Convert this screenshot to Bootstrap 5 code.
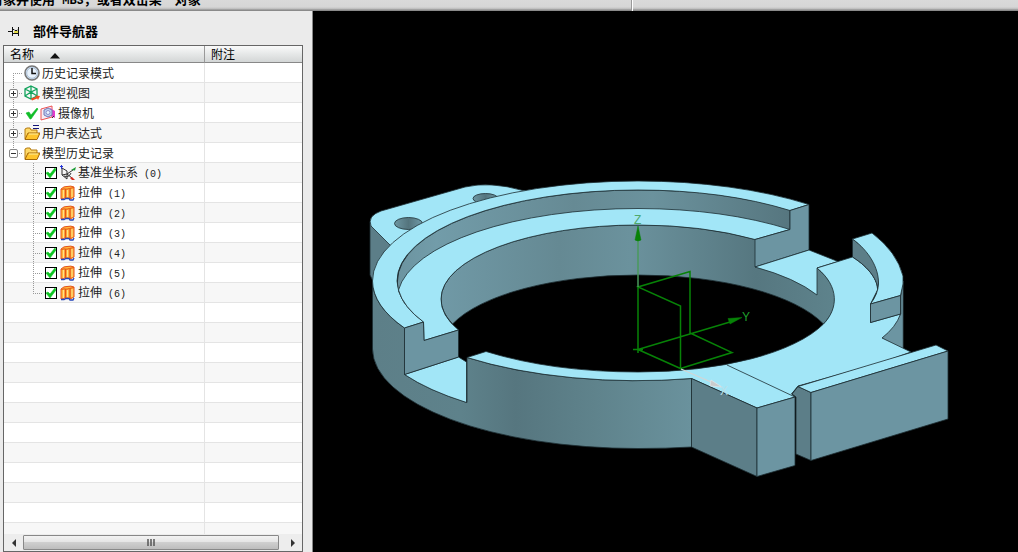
<!DOCTYPE html>
<html lang="zh-CN">
<head>
<meta charset="utf-8">
<meta name="viewport" content="width=device-width, initial-scale=1">
<title>部件导航器</title>
<link href="https://cdn.jsdelivr.net/npm/bootstrap@5.3.0/dist/css/bootstrap.min.css" rel="stylesheet">
<style>
body{font-family:"Liberation Sans","Noto Sans CJK SC",sans-serif;font-size:12px;line-height:20px;color:#222;background:#ebebeb}
.cue-bar{height:11px;background:linear-gradient(#dadada 0,#d6d6d6 7px,#bbb 9px,#8a8a8a 10px);font-size:13px;line-height:16px;color:#000}
.cue-text{font-family:"Noto Sans CJK SC",sans-serif;margin-left:-36px;width:667px;margin-bottom:4px;height:16px}
.cue-text .latin{font-family:"Liberation Mono",monospace;font-size:12px}
.cue-end{width:2px;border-left:1px solid #999;background:#fff}
.side{flex:0 0 313px;border-right:1px solid #888;background:#ebebeb;padding:0 9px 0 3px}
.side-title{height:35px;font-size:13px;color:#000;padding:5px 0 0 4px;font-family:"Noto Sans CJK SC",sans-serif}
.tree-frame{border:1px solid #666;background:#fff;min-height:0}
.tree{table-layout:fixed;width:100%;border-collapse:separate;border-spacing:0;font-family:"Noto Sans CJK SC",sans-serif}
.tree th{height:17px;line-height:16px;font-weight:400;color:#000;padding:0 0 0 6px;background:linear-gradient(#fafafa,#e6e8e8 50%,#d3d6d6);border-bottom:1px solid #888;border-right:1px solid #999}
.tree td{height:20px;padding:0;box-shadow:inset 0 -1px #e4e4e4;border-right:1px solid #e4e4e4}
.tree th:last-child,.tree td:last-child{border-right:0}
.tree col.c-name{width:201px}
.tree tbody tr:nth-child(even) td{background:#f7f7f7}
.item{height:20px;white-space:nowrap}
.item svg{display:block;flex:none}
.item label,.item .name{margin-left:2px;line-height:20px}
.num{font-family:"Liberation Mono",monospace;font-size:10px;white-space:pre}
.twig{flex:none;width:20px;height:20px;padding-left:5px;background:
 repeating-linear-gradient(#999 0 1px,transparent 1px 2px) 9px 0/1px 20px no-repeat,
 repeating-linear-gradient(90deg,#999 0 1px,transparent 1px 2px) 9px 10px/9px 1px no-repeat}
.twig.first{background-position:9px 10px,9px 10px}
.twig.end{background-size:1px 10px,9px 1px}
.twig.deep{width:41px;background-position:29px 0,29px 10px}
.toggle{width:9px;height:9px;border:1px solid #888;border-radius:2px;background:linear-gradient(#333,#333) center/5px 1px no-repeat,#fff;padding:0}
.toggle.plus{background:linear-gradient(#333,#333) center/5px 1px no-repeat,linear-gradient(#333,#333) center/1px 5px no-repeat,#fff}
.tick{flex:none;appearance:none;width:12px;height:12px;margin:0 3px 0 0;border:1px solid #000;background:#fff url("data:image/svg+xml,%3Csvg xmlns='http://www.w3.org/2000/svg' viewBox='0 0 10 10'%3E%3Cpath d='M0 5l2-1 2 2 5-6 1 2-6 8z' fill='%230bc520' stroke='%230bc520' stroke-width='.6'/%3E%3C/svg%3E") center/10px no-repeat}
.hbar{height:17px;flex:none;background:#ededed;margin-top:auto}
.hbar button{border:0;background:none;padding:0;width:19px;height:17px}
.hbar svg{display:block;margin:auto}
.hbar .thumb{width:256px;height:15px;border:1px solid #888;border-radius:1px;background:linear-gradient(#f3f3f3,#e5e5e5 45%,#cfcfcf 50%,#bdbdbd)}
.view3d{background:#000;min-width:0}
.view3d svg{display:block;width:100%;height:100%}
</style>
</head>
<body>
<div class="d-flex flex-column vh-100 overflow-hidden">
<header class="cue-bar d-flex flex-shrink-0 align-items-end overflow-hidden">
 <div class="cue-text fw-bold text-nowrap flex-shrink-0">选择对象并使用<span class="latin"> MB3</span>，或者双击某一对象</div>
 <div class="cue-end align-self-stretch"></div>
</header>
<div class="d-flex flex-fill overflow-hidden">
<aside class="side d-flex flex-column">
 <div class="side-title d-flex align-items-center fw-bold">
  <svg width="14" height="12" viewBox="0 0 14 12" aria-hidden="true"><path d="M1 6.500h4M5.500 2v9M11.500 2v9M6 4.500h1l1 1h2l1-1M6 8.500h5" stroke="#111" fill="none"/><path d="M7 6h4v2H7z" fill="#e4dc48"/></svg>
  <span class="ms-2 ps-1">部件导航器</span>
 </div>
 <div class="tree-frame d-flex flex-column flex-fill">
 <div class="overflow-hidden flex-fill">
 <table class="tree">
 <colgroup><col class="c-name"><col></colgroup>
 <thead><tr><th>名称<svg class="ms-3" width="10" height="6" viewBox="0 0 10 6" aria-hidden="true"><path d="M5 0l5 5.500H0z" fill="#111"/></svg></th><th>附注</th></tr></thead>
 <tbody>
 <tr><td><div class="item d-flex align-items-center"><span class="twig first"></span>
  <svg width="16" height="16" viewBox="0 0 16 16"><circle cx="8" cy="8" r="7" fill="#d5e6f8" stroke="#777" stroke-width="1.600"/><circle cx="8" cy="8" r="5.300" fill="#e8f2fc" stroke="#9fb4ca" stroke-width=".8"/><path d="M8 3v5.500h4" stroke="#111" stroke-width="1.500" fill="none"/></svg><span class="name">历史记录模式</span></div></td><td></td></tr>
 <tr><td><div class="item d-flex align-items-center"><span class="twig d-flex align-items-center"><button class="toggle plus" aria-label="展开 模型视图"></button></span>
  <svg width="16" height="16" viewBox="0 0 16 16"><path d="M7 1l6 3v7l-6 3-6-3V4zM1 4l6 3 6-3M7 1v13M1 11l6-4 6 4" fill="none" stroke="#12a35c" stroke-width="1.300"/><path d="M7 13.500l5-1.500-.5-1.500 4.500.5-2 4-.8-1.500L8 15.500z" fill="#f04c20"/></svg><span class="name">模型视图</span></div></td><td></td></tr>
 <tr><td><div class="item d-flex align-items-center"><span class="twig d-flex align-items-center"><button class="toggle plus" aria-label="展开 摄像机"></button></span>
  <svg width="32" height="16" viewBox="0 0 32 16"><path d="M2 8l3-1 2 3 6-7 1 1-7 10H6z" fill="#10bd28" stroke="#10bd28" stroke-width=".6"/><path d="M17 4l11-3v11l-11 3z" fill="#f5ecf5" stroke="#ee5252"/><path d="M26 3l5 3v7l-4-2z" fill="#e23bcb"/><path d="M20 5l4-2 4 2v5l-4 2-4-2z" fill="#bdd0ef" stroke="#7578b5"/><circle cx="24" cy="7.500" r="2" fill="#e9f5ff" stroke="#8c8bcc"/><path d="M28 13l2-2" stroke="#333"/></svg><span class="name">摄像机</span></div></td><td></td></tr>
 <tr><td><div class="item d-flex align-items-center"><span class="twig d-flex align-items-center"><button class="toggle plus" aria-label="展开 用户表达式"></button></span>
  <svg width="16" height="16" viewBox="0 0 16 16"><path d="M1 14V4l2-1h3l1 2h6v3" fill="#ffd968" stroke="#b47a10"/><path d="M1 14.500L4 8h12l-3 6.500z" fill="#ffc42c" stroke="#a56808"/><path d="M5 9h9" stroke="#fff0a0"/><path d="M9 .5h6M9 3.500h6" stroke="#151579"/></svg><span class="name">用户表达式</span></div></td><td></td></tr>
 <tr><td><div class="item d-flex align-items-center"><span class="twig end d-flex align-items-center"><button class="toggle" aria-label="折叠 模型历史记录"></button></span>
  <svg width="16" height="16" viewBox="0 0 16 16"><path d="M1 14V4l2-1h3l1 2h6v3" fill="#ffd968" stroke="#b47a10"/><path d="M1 14.500L4 8h12l-3 6.500z" fill="#ffc42c" stroke="#a56808"/><path d="M5 9h9" stroke="#fff0a0"/></svg><span class="name">模型历史记录</span></div></td><td></td></tr>
 <tr><td><div class="item d-flex align-items-center"><span class="twig deep"></span><input class="tick" type="checkbox" id="f0" checked>
  <svg width="16" height="16" viewBox="0 0 16 16"><path d="M2 3v7l5 4V6l-5-3M2 10l5-1 6-4M7 9l5 4M4 11q5 2 7-3" fill="none" stroke="#333"/><path d="M1.500 0v4M0 1.500h3" stroke="#2433d8"/><path d="M11 5l5-3-1 3.500z" fill="#1b9c35"/><path d="M10 13l2-1 3 3h-3z" fill="#d52b1f"/></svg><label for="f0">基准坐标系<span class="num"> (0)</span></label></div></td><td></td></tr>
 <tr><td><div class="item d-flex align-items-center"><span class="twig deep"></span><input class="tick" type="checkbox" id="f1" checked>
  <svg width="16" height="16" viewBox="0 0 16 16"><g id="extrude"><path d="M1 4q3-3 6-2.500Q11 .5 14 2v10l-3 1.500Q5 12 1 14z" fill="#ffb63a" stroke="#e5531a"/><path d="M1.500 4.500q3-1 4-.5t4-.5l4.500-1" fill="none" stroke="#e5531a"/><path d="M5.500 4v9M10 3.500v10" stroke="#e5531a" stroke-width="1.300"/><path d="M3.500 5v8M7.500 5v7M12 4v8" stroke="#ffe08a"/><path d="M1 14.500h3l2-1h3l1 1.500h3l1-2" fill="none" stroke="#2447ba" stroke-width="1.300"/></g></svg><label for="f1">拉伸<span class="num"> (1)</span></label></div></td><td></td></tr>
 <tr><td><div class="item d-flex align-items-center"><span class="twig deep"></span><input class="tick" type="checkbox" id="f2" checked>
  <svg width="16" height="16" viewBox="0 0 16 16"><use href="#extrude"/></svg><label for="f2">拉伸<span class="num"> (2)</span></label></div></td><td></td></tr>
 <tr><td><div class="item d-flex align-items-center"><span class="twig deep"></span><input class="tick" type="checkbox" id="f3" checked>
  <svg width="16" height="16" viewBox="0 0 16 16"><use href="#extrude"/></svg><label for="f3">拉伸<span class="num"> (3)</span></label></div></td><td></td></tr>
 <tr><td><div class="item d-flex align-items-center"><span class="twig deep"></span><input class="tick" type="checkbox" id="f4" checked>
  <svg width="16" height="16" viewBox="0 0 16 16"><use href="#extrude"/></svg><label for="f4">拉伸<span class="num"> (4)</span></label></div></td><td></td></tr>
 <tr><td><div class="item d-flex align-items-center"><span class="twig deep"></span><input class="tick" type="checkbox" id="f5" checked>
  <svg width="16" height="16" viewBox="0 0 16 16"><use href="#extrude"/></svg><label for="f5">拉伸<span class="num"> (5)</span></label></div></td><td></td></tr>
 <tr><td><div class="item d-flex align-items-center"><span class="twig deep end"></span><input class="tick" type="checkbox" id="f6" checked>
  <svg width="16" height="16" viewBox="0 0 16 16"><use href="#extrude"/></svg><label for="f6">拉伸<span class="num"> (6)</span></label></div></td><td></td></tr>
 <tr><td></td><td></td></tr><tr><td></td><td></td></tr><tr><td></td><td></td></tr><tr><td></td><td></td></tr>
 <tr><td></td><td></td></tr><tr><td></td><td></td></tr><tr><td></td><td></td></tr><tr><td></td><td></td></tr>
 <tr><td></td><td></td></tr><tr><td></td><td></td></tr><tr><td></td><td></td></tr><tr><td></td><td></td></tr>
 </tbody></table>
 </div>
 <div class="hbar d-flex align-items-center">
  <button aria-label="向左滚动"><svg width="4" height="8" viewBox="0 0 4 8"><path d="M4 0v8L0 4z" fill="#333"/></svg></button>
  <div class="thumb d-flex align-items-center"><svg width="9" height="7" viewBox="0 0 9 7"><path d="M1 0v7M4 0v7M7 0v7" stroke="#555" stroke-width="1.500"/></svg></div>
  <button class="ms-1" aria-label="向右滚动"><svg width="4" height="8" viewBox="0 0 4 8"><path d="M0 0v8l4-4z" fill="#333"/></svg></button>
 </div>
 </div>
</aside>
<main class="view3d flex-fill">
<svg viewBox="313 11 705 541" role="img" aria-label="零件三维模型">
 <defs>
  <linearGradient id="outer" gradientUnits="userSpaceOnUse" x1="372" y1="0" x2="692" y2="0"><stop offset="0" stop-color="#5d7f88"/><stop offset=".28" stop-color="#5e828b"/><stop offset=".45" stop-color="#56767f"/><stop offset=".7" stop-color="#5f838c"/><stop offset="1" stop-color="#6a929d"/></linearGradient>
  <linearGradient id="bore" gradientUnits="userSpaceOnUse" x1="441" y1="0" x2="835" y2="0"><stop offset="0" stop-color="#7099a6"/><stop offset=".3" stop-color="#658993"/><stop offset=".48" stop-color="#6b929d"/><stop offset=".8" stop-color="#567780"/><stop offset="1" stop-color="#5e838c"/></linearGradient>
  <linearGradient id="step" gradientUnits="userSpaceOnUse" x1="397" y1="0" x2="790" y2="0"><stop offset="0" stop-color="#6c94a0"/><stop offset=".1" stop-color="#729ca9"/><stop offset=".45" stop-color="#668a94"/><stop offset=".65" stop-color="#6b929d"/><stop offset="1" stop-color="#56767f"/></linearGradient>
  <linearGradient id="hole"><stop offset="0" stop-color="#6d96a2"/><stop offset=".5" stop-color="#54747d"/><stop offset="1" stop-color="#719ba8"/></linearGradient>
 </defs>
 <g stroke="#1d2d32" stroke-width=".8" stroke-linejoin="round">
  <!-- mounting ear -->
  <path d="M370 222V275L374 283 392 246z" fill="#5c7e88"/>
  <path d="M390 245L371 226Q367 216 381 211L465 187Q490 181 523 190.500L560 200 420 260z" fill="#a2e6f7"/>
  <ellipse cx="408.500" cy="223.500" rx="14" ry="6" fill="url(#hole)"/><ellipse cx="485.500" cy="198.500" rx="12.500" ry="5" fill="url(#hole)"/>
  <!-- outer wall with the front slot -->
  <path d="M372.500 281V349A265.500 100 0 0 0 638 448.500Q666 448.500 691.500 447V378.500A265.500 100 0 0 1 467 357.500V402.500A265.500 100 0 0 1 404.500 374.500V328A265.500 100 0 0 1 372.500 281z" fill="url(#outer)"/>
  <path d="M404.500 374.500L458.500 357 466.500 362V402.500A265.500 100 0 0 1 404.500 374.500z" fill="#a2e6f7"/>
  <!-- stepped rim -->
  <path d="M397.500 290V281A241 91 0 0 1 638 190A241 91 0 0 1 790 210V229.500L700 235 450 265z" fill="url(#step)"/>
  <path d="M404.500 328A265.500 100 0 0 1 372.500 281A265.500 100 0 0 1 638 181A265.500 100 0 0 1 809 204.500L790 210.500A241 91 0 0 0 638 190A241 91 0 0 0 397 281A241 91 0 0 0 423.500 322z" fill="#a2e6f7"/>
  <path d="M452.500 324A197 74 0 0 1 441 299A197 74 0 0 1 638 225A197 74 0 0 1 823.500 324A197 74 0 0 0 638 275A197 74 0 0 0 452.500 324z" fill="url(#bore)"/>
  <path d="M398.500 290A241 91 0 0 1 638 208.500A241 91 0 0 1 790 229.500L755 239.500A197 74 0 0 0 638 225A197 74 0 0 0 441 299A197 74 0 0 0 458.500 330L424 340.500 423.500 322A241 91 0 0 1 398.500 290z" fill="#a2e6f7"/>
  <path d="M404.500 328L423.500 322 424 340.500 458.500 330V357L404.500 374.500z" fill="#6c95a2"/>
  <!-- rear slot -->
  <path d="M755 239.500L790 229.500V210.500L809 204.500V250L755 267z" fill="#6c95a2"/>
  <path d="M755 267L809 250 838 261.500 817 268V295A197 74 0 0 0 755 267z" fill="#a2e6f7"/>
  <!-- right side wall -->
  <path d="M903 281V350L882 338 901 314V296z" fill="#6c95a2" stroke="#425b63"/>
  <!-- front rim and ledge -->
  <path d="M467 357.500L486 351.500A241 91 0 0 0 638 372A197 74 0 0 0 823.500 324C838 309 840 287 817 268L852.500 257C870 268 878 281 877.500 290L870.500 304 870.500 322.500 900.500 314Q896 327 882 338L911 352 880 363 798 386 791.500 394 795 397 757 408 691.500 378.500A265.500 100 0 0 1 467 357.500z" fill="#a2e6f7"/>
  <path d="M727 365L795 397" fill="none"/>
  <!-- raised arc on the right -->
  <path d="M852.500 239V257C870 268 878 281 877.500 290Q884 261 852.500 239z" fill="#5c7e88"/>
  <path d="M852.500 239L872 233Q897 252 903 276V284L900.500 295.500 870.500 304Q878 294 878.500 284C879 268 869 251 852.500 239z" fill="#a2e6f7"/>
  <path d="M870.500 304L900.500 295.500V314L870.500 322.500z" fill="#6c95a2"/>
  <!-- clamping lugs -->
  <path d="M691.500 378.500L757 408V476.500L691.500 447z" fill="#5c7e88"/>
  <path d="M757 408L795 397V465.500L757 476.500z" fill="#6c95a2"/>
  <path d="M792 394L798 386.500 811 392.500V460.500L796 454V397z" fill="#5c7e88"/>
  <path d="M798 386.500L936 345 948 351 811 392.500z" fill="#a2e6f7"/>
  <path d="M811 392.500L948 351V419L811 460.500z" fill="#6c95a2"/>
 </g>
 <!-- datum coordinate system -->
 <g fill="none" stroke="#078207" stroke-width="1.500">
  <path d="M638 353V287M633 349.500h10M638 349.500L680.500 368.500V306L638 287 690 271.500V333L732 352.500 680.500 368.500M638 349.500L730 322"/>
  <path d="M638 287V240" stroke="#4a9a5d"/>
  <path d="M638 226l3 14q-3 2-6 0zM742 317.500l-14 1 2 5.500z" fill="#078207" stroke-width=".5"/>
 </g>
 <path d="M681 369L711 382" stroke="#d2d5d5" stroke-width="1.300"/><path d="M711 380l11 7-12-1z" fill="#c9cccd" stroke="#eee" stroke-width=".5"/>
 <g font-family="Liberation Sans" font-size="12"><text x="634" y="224" fill="#4fa86b">Z</text><text x="742" y="321" fill="#1f9f2c">Y</text><text x="720" y="395" fill="#b8dfe8">X</text></g>
</svg>
</main>
</div>
</div>
<script src="https://cdn.jsdelivr.net/npm/bootstrap@5.3.0/dist/js/bootstrap.bundle.min.js"></script>
</body>
</html>
